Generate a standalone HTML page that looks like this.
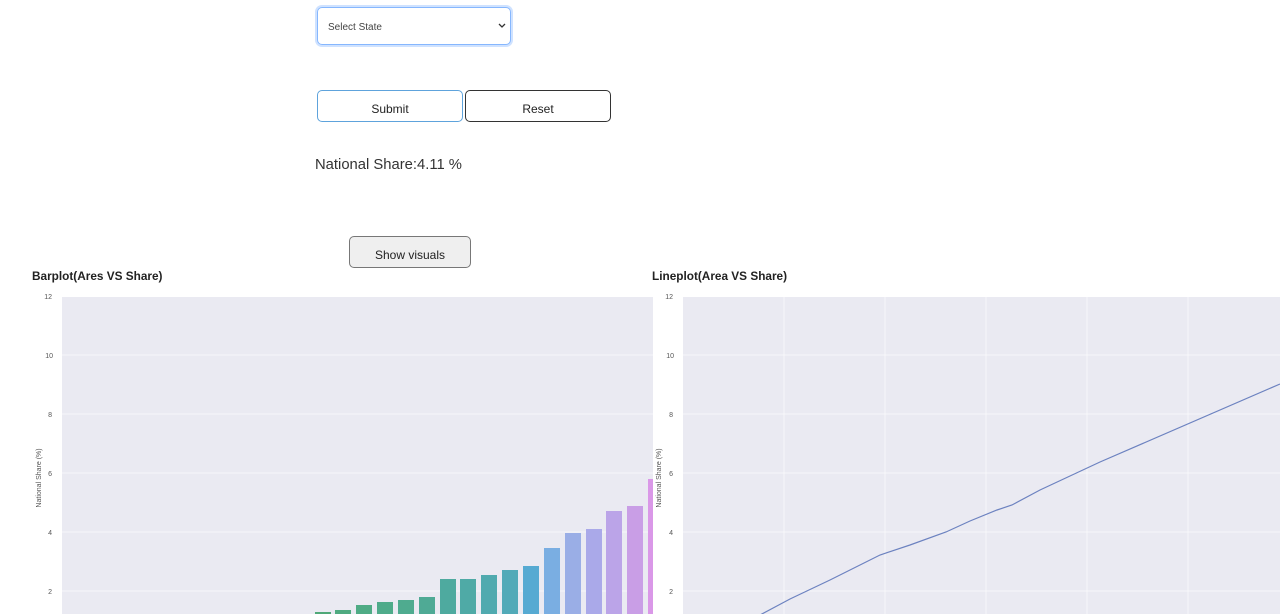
<!DOCTYPE html>
<html><head><meta charset="utf-8"><style>
body{margin:0;width:1280px;height:614px;overflow:hidden;background:#fff;font-family:"Liberation Sans",sans-serif;position:relative}
.a{position:absolute}
.sel{left:317px;top:7px;width:194px;height:38px;border:1px solid #86b7fe;box-shadow:0 0 0 2px #cfe2ff;border-radius:5px;box-sizing:border-box;font-size:10px;color:#444;padding:14px 10px}
.btn{height:32px;box-sizing:border-box;border-radius:5px;font-size:12px;text-align:center;line-height:36px;color:#222}
h3{position:absolute;margin:0;font-size:11.8px;font-weight:bold;color:#222}
</style></head><body>
<div class="a sel">Select State<svg class="a" style="right:4px;top:15px" width="8" height="6"><path d="M1 1L4 4L7 1" stroke="#333" fill="none" stroke-width="1.3"/></svg></div>
<div class="a btn" style="left:317px;top:90px;width:146px;border:1px solid #5ea3dc">Submit</div>
<div class="a btn" style="left:465px;top:90px;width:146px;border:1px solid #333">Reset</div>
<div class="a" style="left:315px;top:157px;font-size:14.8px;color:#333">National Share:4.11 %</div>
<div class="a btn" style="left:349px;top:236px;width:122px;border:1px solid #777;background:#efefef">Show visuals</div>
<h3 style="left:32px;top:269px">Barplot(Ares VS Share)</h3>
<h3 style="left:652px;top:269px">Lineplot(Area VS Share)</h3>
<svg class="a" style="left:0;top:0" width="1280" height="614" font-family="Liberation Sans" font-size="7" fill="#555">
<rect x="62" y="297" width="591" height="317" fill="#eaeaf2"/>
<g stroke="#f7f7fa" stroke-width="1"><line x1="62" x2="653" y1="355" y2="355"/><line x1="62" x2="653" y1="414" y2="414"/><line x1="62" x2="653" y1="473" y2="473"/><line x1="62" x2="653" y1="532" y2="532"/><line x1="62" x2="653" y1="591" y2="591"/></g>
<g text-anchor="end"><text x="52" y="299">12</text><text x="53" y="358">10</text><text x="52" y="417">8</text><text x="52" y="476">6</text><text x="52" y="535">4</text><text x="52" y="594">2</text></g>
<text transform="translate(41,478) rotate(-90)" text-anchor="middle">National Share (%)</text>
<g>
<rect x="315" y="612" width="16" height="4" fill="#4fa878"/>
<rect x="335" y="610" width="16" height="6" fill="#4faa80"/>
<rect x="356" y="605" width="16" height="11" fill="#4fab85"/>
<rect x="377" y="602" width="16" height="14" fill="#4fab8a"/>
<rect x="398" y="600" width="16" height="16" fill="#4fab8f"/>
<rect x="419" y="597" width="16" height="19" fill="#4faa95"/>
<rect x="440" y="579" width="16" height="37" fill="#4eaa9f"/>
<rect x="460" y="579" width="16" height="37" fill="#4faaa6"/>
<rect x="481" y="575" width="16" height="41" fill="#50aaaf"/>
<rect x="502" y="570" width="16" height="46" fill="#52aab8"/>
<rect x="523" y="566" width="16" height="50" fill="#56aad2"/>
<rect x="544" y="548" width="16" height="68" fill="#7aaee2"/>
<rect x="565" y="533" width="16" height="83" fill="#9aaee6"/>
<rect x="586" y="529" width="16" height="87" fill="#aaa9e9"/>
<rect x="606" y="511" width="16" height="105" fill="#bba4e8"/>
<rect x="627" y="506" width="16" height="110" fill="#c99ee6"/>
<rect x="648" y="479" width="5" height="137" fill="#da98e8"/>
</g>
<rect x="653" y="290" width="30" height="324" fill="#fff"/>
<rect x="683" y="297" width="597" height="317" fill="#eaeaf2"/>
<g stroke="#f7f7fa" stroke-width="1"><line x1="683" x2="1280" y1="355" y2="355"/><line x1="683" x2="1280" y1="414" y2="414"/><line x1="683" x2="1280" y1="473" y2="473"/><line x1="683" x2="1280" y1="532" y2="532"/><line x1="683" x2="1280" y1="591" y2="591"/>
<line x1="784" x2="784" y1="297" y2="614"/><line x1="885" x2="885" y1="297" y2="614"/><line x1="986" x2="986" y1="297" y2="614"/><line x1="1087" x2="1087" y1="297" y2="614"/><line x1="1188" x2="1188" y1="297" y2="614"/></g>
<g text-anchor="end"><text x="673" y="299">12</text><text x="674" y="358">10</text><text x="673" y="417">8</text><text x="673" y="476">6</text><text x="673" y="535">4</text><text x="673" y="594">2</text></g>
<text transform="translate(661,478) rotate(-90)" text-anchor="middle">National Share (%)</text>
<polyline points="760,615 790,599 830,580 860,565 880,555 910,545 946,532 970,521 997,510 1012,505 1040,490 1070,476 1100,462 1280,384" fill="none" stroke="#6c82c0" stroke-width="1.2"/>
</svg>
</body></html>
